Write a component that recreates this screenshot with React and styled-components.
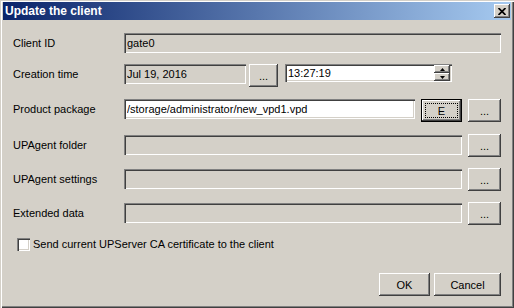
import React from "react";
import styled, { createGlobalStyle, css } from "styled-components";

const FACE = "#d4d0c8";

const GlobalStyle = createGlobalStyle`
  html, body { margin: 0; padding: 0; background: ${FACE}; }
  body {
    font-family: "Liberation Sans", Arial, sans-serif;
    font-size: 11px;
    color: #000;
  }
  * { box-sizing: border-box; }
`;

const raised = css`
  background: ${FACE};
  border: none;
  box-shadow: inset -1px -1px #404040, inset 1px 1px #fff, inset -2px -2px #808080,
    inset 2px 2px ${FACE};
`;

const sunken = css`
  border: none;
  box-shadow: inset 1px 1px #808080, inset 2px 2px #404040, inset -1px -1px #fff,
    inset -2px -2px ${FACE};
`;

const Window = styled.div`
  width: 514px;
  height: 308px;
  background: ${FACE};
  box-shadow: inset 1px 1px ${FACE}, inset 2px 2px #fff, inset -1px -1px #404040,
    inset -2px -2px #808080;
  padding: 2px 3px 3px 3px;
  display: flex;
  flex-direction: column;
`;

const TitleBar = styled.div`
  height: 18px;
  display: flex;
  align-items: center;
  justify-content: space-between;
  padding: 0 1px 0 2px;
  background: linear-gradient(to right, #0a246a, #a6caf0);
`;

const Title = styled.span`
  color: #fff;
  font-weight: bold;
  font-size: 12px;
  line-height: 18px;
`;

const CloseButton = styled.button`
  ${raised};
  width: 16px;
  height: 14px;
  padding: 0;
  display: flex;
  align-items: center;
  justify-content: center;
`;

const Form = styled.div`
  display: flex;
  flex-direction: column;
  padding: 0 10px;
`;

const Row = styled.div`
  display: grid;
  grid-template-columns: 111px 1fr;
  align-items: start;
  min-height: 23px;
  margin-top: ${(p) => p.$top}px;
`;

const Label = styled.label`
  height: 22px;
  line-height: 22px;
  white-space: nowrap;
`;

const Controls = styled.div`
  display: flex;
  align-items: flex-start;
  gap: ${(p) => p.$gap ?? 6}px;
`;

const Field = styled.input`
  ${sunken};
  height: 20px;
  margin-top: 1px;
  padding: 0 3px;
  font: inherit;
  color: #000;
  outline: none;
  background: ${(p) => (p.$disabled ? FACE : "#fff")};
  flex: ${(p) => (p.$width ? "none" : "1")};
  width: ${(p) => (p.$width ? `${p.$width}px` : "auto")};
  min-width: 0;
`;

const SpinBox = styled.div`
  ${sunken};
  background: #fff;
  width: 167px;
  height: 18px;
  margin-top: 1px;
  margin-left: ${(p) => p.$offset ?? 0}px;
  display: flex;
  align-items: center;
  padding: 1px 2px 1px 2px;
`;

const SpinInput = styled.input`
  flex: 1;
  min-width: 0;
  border: none;
  outline: none;
  background: transparent;
  font: inherit;
  color: #000;
  padding: 0 0 0 1px;
  height: 15px;
`;

const SpinColumn = styled.div`
  display: flex;
  flex-direction: column;
  width: 16px;
`;

const SpinButton = styled.button`
  ${raised};
  height: 8px;
  width: 16px;
  padding: 0;
  display: flex;
  align-items: center;
  justify-content: center;
`;

const Button = styled.button`
  ${raised};
  font: inherit;
  color: #000;
  padding: 0;
  height: 23px;
  width: ${(p) => p.$width}px;
  flex: none;
  margin-top: ${(p) => (p.$drop ? 1 : 0)}px;
  position: relative;
  display: flex;
  align-items: center;
  justify-content: center;
`;

const DefaultButton = styled(Button)`
  border: 1px solid #000;
  box-shadow: inset -1px -1px #404040, inset 1px 1px #fff, inset -2px -2px #808080;
  &::after {
    content: "";
    position: absolute;
    inset: 3px;
    border: 1px dotted #000;
  }
`;

const CheckRow = styled.label`
  display: flex;
  align-items: center;
  gap: 3px;
  margin-top: 13px;
  padding-left: 4px;
  height: 13px;
  line-height: 13px;
`;

const CheckBox = styled.span`
  ${sunken};
  display: inline-block;
  width: 13px;
  height: 13px;
  background: #fff;
`;

const Footer = styled.div`
  display: flex;
  justify-content: flex-end;
  gap: 4px;
  margin-top: 22px;
`;

const Arrow = ({ up }) => (
  <svg width="5" height="3" viewBox="0 0 5 3">
    <path d={up ? "M2.5 0 L5 3 L0 3 Z" : "M0 0 L5 0 L2.5 3 Z"} fill="#000" />
  </svg>
);

export default function App() {
  return (
    <>
      <GlobalStyle />
      <Window>
        <TitleBar>
          <Title>Update the client</Title>
          <CloseButton aria-label="Close">
            <svg width="8" height="7" viewBox="0 0 8 7">
              <path d="M0.5 0 L7.5 7 M7.5 0 L0.5 7" stroke="#000" strokeWidth="1.7" />
            </svg>
          </CloseButton>
        </TitleBar>
        <Form>
          <Row $top={12}>
            <Label>Client ID</Label>
            <Controls>
              <Field $disabled readOnly defaultValue="gate0" />
            </Controls>
          </Row>
          <Row $top={8}>
            <Label>Creation time</Label>
            <Controls $gap={3}>
              <Field $disabled $width={122} readOnly defaultValue="Jul 19, 2016" />
              <Button $width={29} $drop>...</Button>
              <SpinBox $offset={4}>
                <SpinInput readOnly defaultValue="13:27:19" />
                <SpinColumn>
                  <SpinButton><Arrow up /></SpinButton>
                  <SpinButton><Arrow /></SpinButton>
                </SpinColumn>
              </SpinBox>
            </Controls>
          </Row>
          <Row $top={11}>
            <Label>Product package</Label>
            <Controls>
              <Field readOnly defaultValue="/storage/administrator/new_vpd1.vpd" />
              <DefaultButton $width={41} $drop>E</DefaultButton>
              <Button $width={33} $drop>...</Button>
            </Controls>
          </Row>
          <Row $top={12}>
            <Label>UPAgent folder</Label>
            <Controls>
              <Field $disabled readOnly defaultValue="" />
              <Button $width={33}>...</Button>
            </Controls>
          </Row>
          <Row $top={11}>
            <Label>UPAgent settings</Label>
            <Controls>
              <Field $disabled readOnly defaultValue="" />
              <Button $width={33}>...</Button>
            </Controls>
          </Row>
          <Row $top={11}>
            <Label>Extended data</Label>
            <Controls>
              <Field $disabled readOnly defaultValue="" />
              <Button $width={33}>...</Button>
            </Controls>
          </Row>
          <CheckRow>
            <CheckBox />
            <span>Send current UPServer CA certificate to the client</span>
          </CheckRow>
          <Footer>
            <Button $width={51}>OK</Button>
            <Button $width={67}>Cancel</Button>
          </Footer>
        </Form>
      </Window>
    </>
  );
}
